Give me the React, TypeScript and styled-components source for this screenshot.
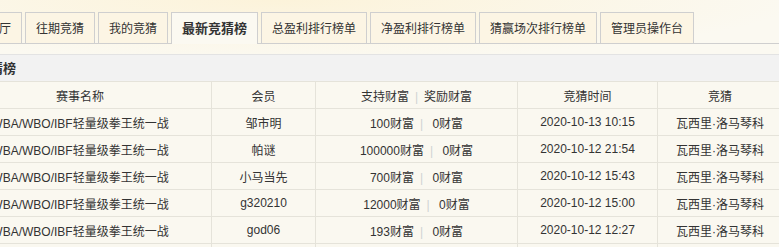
import React from "react";
import styled, { createGlobalStyle } from "styled-components";

const Global = createGlobalStyle`
  html, body {
    margin: 0;
    padding: 0;
    background: #fbf9f1;
    overflow: hidden;
  }
  body {
    font-family: "Liberation Sans", "Noto Sans CJK SC", sans-serif;
    font-size: 12px;
    color: #333;
  }
`;

const Page = styled.div`
  width: 834px;
  margin-left: -52px;
  min-height: 247px;
  background:
    radial-gradient(ellipse 520px 60px at 330px 0px, #fcf3da 0%, rgba(251, 249, 241, 0) 100%),
    #fbf9f1;
`;

const TabStrip = styled.ul`
  list-style: none;
  margin: 0;
  padding: 12px 0 0 4px;
  display: flex;
  gap: 3px;
  border-bottom: 1px solid #cfcfcf;
`;

const Tab = styled.li<{ $active?: boolean }>`
  height: 30px;
  line-height: 30px;
  padding: 0 10px;
  border: 1px solid #cfcfcf;
  border-bottom: none;
  background: ${(p) => (p.$active ? "#fbf9f1" : "#fcf5e4")};
  font-family: "Noto Sans CJK SC", "Liberation Sans", sans-serif;
  font-size: ${(p) => (p.$active ? "13px" : "12px")};
  font-weight: ${(p) => (p.$active ? 700 : 400)};
  color: #333;
  white-space: nowrap;
  margin-bottom: ${(p) => (p.$active ? "-1px" : "0")};
  height: ${(p) => (p.$active ? "31px" : "30px")};
`;

const Gap = styled.div`
  height: 10px;
`;

const TitleBar = styled.div`
  height: 26px;
  line-height: 26px;
  padding-left: 3px;
  background: #f2f2f2;
  border-top: 1px solid #e3e3e3;
  font-family: "Noto Sans CJK SC", "Liberation Sans", sans-serif;
  font-size: 13px;
  font-weight: 700;
  color: #333;
`;

const Table = styled.table`
  width: 834px;
  table-layout: fixed;
  border-collapse: collapse;
  background: #faf8f0;
`;

const Cell = styled.td`
  height: 26px;
  padding: 0;
  border: 1px solid #e5e3da;
  text-align: center;
  white-space: nowrap;
  overflow: hidden;
  font-size: 12px;
  color: #333;
  font-family: "Liberation Sans", "Noto Sans CJK SC", sans-serif;
`;

const HeadCell = styled(Cell).attrs({ as: "th" })`
  font-weight: 400;
`;

const Sep = styled.span`
  color: #cfd3d3;
  margin: 0 6px;
`;

const tabs = [
  "竞猜大厅",
  "往期竞猜",
  "我的竞猜",
  "最新竞猜榜",
  "总盈利排行榜单",
  "净盈利排行榜单",
  "猜赢场次排行榜单",
  "管理员操作台",
];

const rows = [
  { user: "邹市明", support: "100", reward: "0", time: "2020-10-13 10:15" },
  { user: "帕谜", support: "100000", reward: "0", time: "2020-10-12 21:54" },
  { user: "小马当先", support: "700", reward: "0", time: "2020-10-12 15:43" },
  { user: "g320210", support: "12000", reward: "0", time: "2020-10-12 15:00" },
  { user: "god06", support: "193", reward: "0", time: "2020-10-12 12:27" },
  { user: "拳迷", support: "500", reward: "0", time: "2020-10-12 11:08" },
];

const match = "WBA/WBO/IBF轻量级拳王统一战";

export default function App() {
  return (
    <>
      <Global />
      <Page>
        <TabStrip>
          {tabs.map((t) => (
            <Tab key={t} $active={t === "最新竞猜榜"}>
              {t}
            </Tab>
          ))}
        </TabStrip>
        <Gap />
        <TitleBar>最新竞猜榜</TitleBar>
        <Table>
          <colgroup>
            <col style={{ width: 263 }} />
            <col style={{ width: 104 }} />
            <col style={{ width: 202 }} />
            <col style={{ width: 140 }} />
            <col style={{ width: 125 }} />
          </colgroup>
          <thead>
            <tr>
              <HeadCell>赛事名称</HeadCell>
              <HeadCell>会员</HeadCell>
              <HeadCell>
                支持财富<Sep>|</Sep>奖励财富
              </HeadCell>
              <HeadCell>竞猜时间</HeadCell>
              <HeadCell>竞猜</HeadCell>
            </tr>
          </thead>
          <tbody>
            {rows.map((r, i) => (
              <tr key={i}>
                <Cell>{match}</Cell>
                <Cell>{r.user}</Cell>
                <Cell>
                  {r.support}财富<Sep>|</Sep> {r.reward}财富
                </Cell>
                <Cell>{r.time}</Cell>
                <Cell>瓦西里·洛马琴科</Cell>
              </tr>
            ))}
          </tbody>
        </Table>
      </Page>
    </>
  );
}
